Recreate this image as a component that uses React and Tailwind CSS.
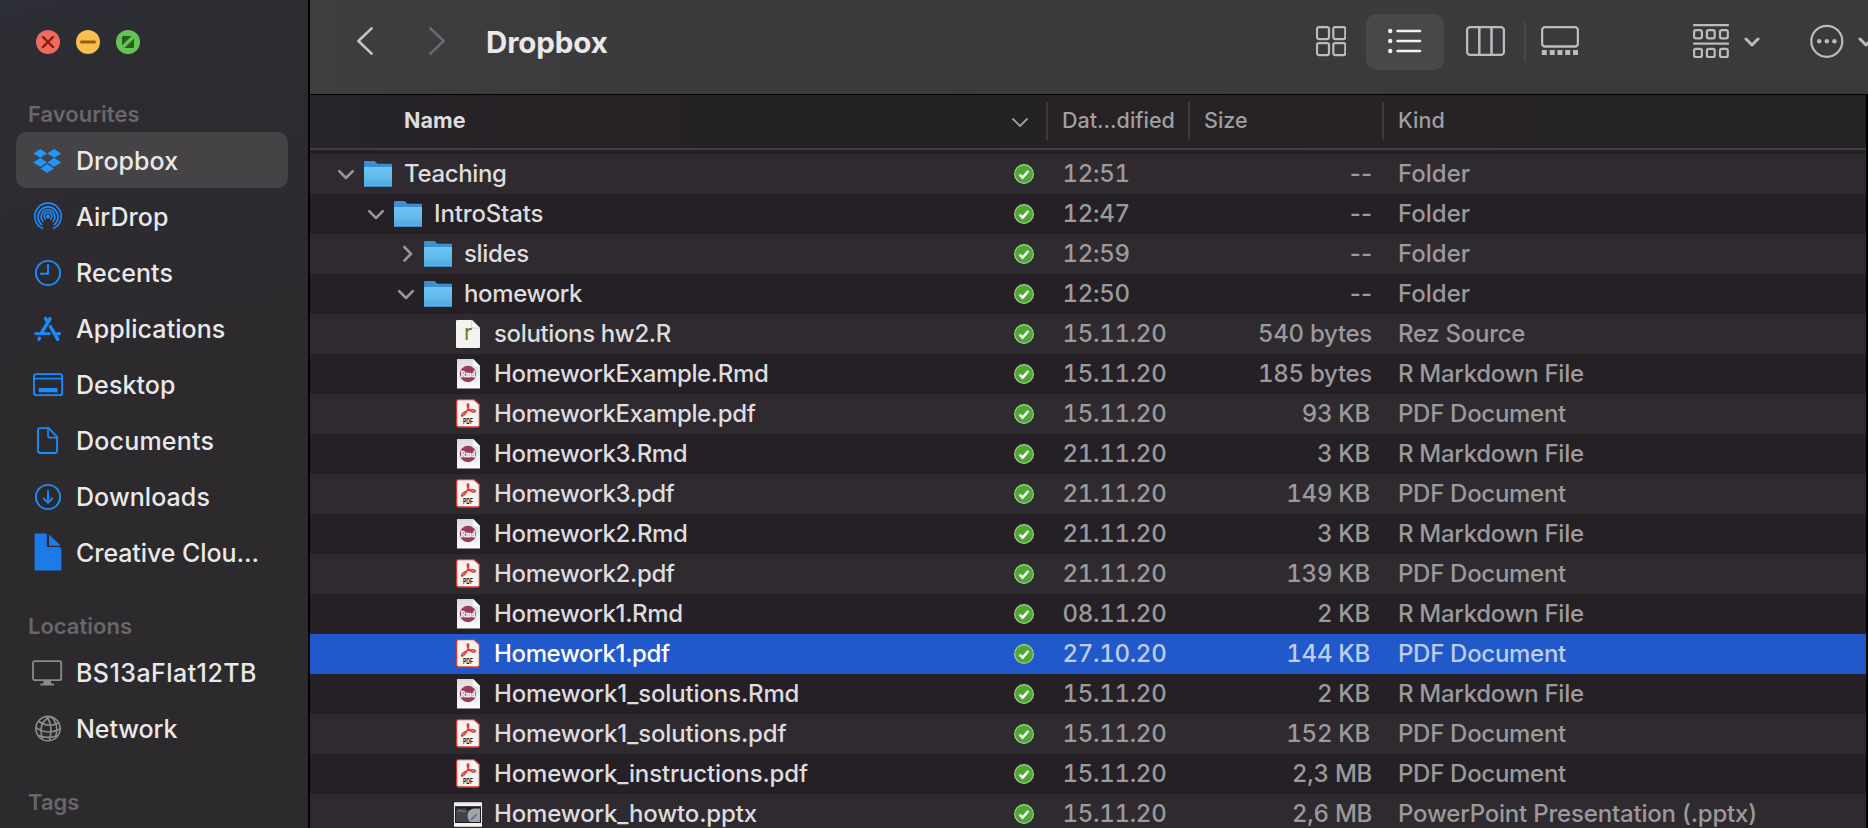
import React from "react";

const BLUE = "#1a8cff";
const GREY = "#8b8a8d";

/* ---------- sidebar icons ---------- */

const SidebarSvg = ({ children }) => (
  <svg width="32" height="40" viewBox="0 0 32 40" fill="none" className="shrink-0">
    {children}
  </svg>
);

const DropboxIcon = () => (
  <SidebarSvg>
    <g fill="#2196fb">
      <path d="M8.3 9 15 13.4 8.3 17.8 1.3 13.4z" />
      <path d="M22.2 9 29.2 13.4 22.2 17.8 15.3 13.4z" />
      <path d="M8.3 18 15 22.4 8.3 26.8 1.3 22.4z" />
      <path d="M22.2 18 29.2 22.4 22.2 26.8 15.3 22.4z" />
      <path d="M15.2 24 22 28.5 15.2 33 8.4 28.5z" />
    </g>
  </SidebarSvg>
);

const AirDropIcon = () => (
  <SidebarSvg>
    <g stroke={BLUE} strokeWidth="1.7" strokeLinecap="round">
      <path d="M10.3 32.3A13.2 13.2 0 1 1 21.7 32.3" />
      <path d="M9.6 28.6A10 10 0 1 1 22.4 28.6" />
      <path d="M10.9 25.3A6.9 6.9 0 1 1 21.1 25.3" />
      <path d="M13.3 23A3.9 3.9 0 1 1 18.7 23" />
    </g>
    <circle cx="16" cy="20.6" r="2" fill={BLUE} />
  </SidebarSvg>
);

const RecentsIcon = () => (
  <SidebarSvg>
    <g stroke={BLUE} strokeWidth="1.9" strokeLinecap="round" strokeLinejoin="round">
      <circle cx="16" cy="21" r="12.1" />
      <path d="M16 12.6V21.7H8.8" />
    </g>
  </SidebarSvg>
);

const ApplicationsIcon = () => (
  <SidebarSvg>
    <g stroke={BLUE} strokeWidth="3.4" strokeLinecap="round">
      <path d="M13.6 10.6 15.6 14" />
      <path d="M18.1 10.6 9.6 24.8" />
      <path d="M18.4 18.6 25.8 31.4" />
      <path d="M6.9 31.2 7.5 30.2" />
    </g>
    <g stroke={BLUE} strokeWidth="2.8" strokeLinecap="round">
      <path d="M3.6 25.6H17.4" />
      <path d="M23.4 25.6H27.6" />
    </g>
  </SidebarSvg>
);

const DesktopIcon = () => (
  <SidebarSvg>
    <rect x="2" y="10.1" width="28.2" height="21" rx="2.4" stroke={BLUE} strokeWidth="1.9" />
    <path d="M2 14.6H30" stroke={BLUE} strokeWidth="1.6" />
    <rect x="6.6" y="24" width="19" height="4.2" rx="1" fill={BLUE} />
  </SidebarSvg>
);

const DocumentsIcon = () => (
  <SidebarSvg>
    <g stroke={BLUE} strokeWidth="1.9" strokeLinejoin="round">
      <path d="M8.4 8.1H16.6L25.1 16.9V30.6A2.4 2.4 0 0 1 22.7 33H8.4A2.4 2.4 0 0 1 6 30.6V10.4A2.4 2.4 0 0 1 8.4 8.1z" />
      <path d="M16 8.6V16A1.6 1.6 0 0 0 17.6 17.6H24.8" strokeWidth="1.6" />
    </g>
  </SidebarSvg>
);

const DownloadsIcon = () => (
  <SidebarSvg>
    <g stroke={BLUE} strokeWidth="1.9" strokeLinecap="round" strokeLinejoin="round">
      <circle cx="16" cy="21" r="12.1" />
      <path d="M16 15V26.2M11.6 22.4 16 26.8 20.4 22.4" />
    </g>
  </SidebarSvg>
);

const CreativeIcon = () => (
  <SidebarSvg>
    <path d="M2.6 1.6H13.6Q14.8 1.6 14.8 2.8V15H26.4Q29.4 15.4 29.4 18V38.4H2.6z" fill="#1d7be8" />
    <path d="M17 2.6 29 13.8H17z" fill="#1d7be8" />
  </SidebarSvg>
);

const DisplayIcon = () => (
  <SidebarSvg>
    <rect x="1" y="9.2" width="28.2" height="19" rx="2" stroke={GREY} strokeWidth="1.8" />
    <path d="M11.4 28.4H19V31.6H21.2A1 1 0 0 1 21.2 33.6H9.2A1 1 0 0 1 9.2 31.6H11.4z" fill={GREY} />
  </SidebarSvg>
);

const NetworkIcon = () => (
  <SidebarSvg>
    <g stroke={GREY} strokeWidth="1.6">
      <circle cx="16" cy="20.6" r="12.2" />
      <path d="M19 8.8C10 12 7 20 10.6 31.6" />
      <path d="M14.4 8.6C19.4 14 19.6 24 17.4 32.6" />
      <path d="M19 8.8C25.6 14 25.4 23 23.2 30.4" />
      <path d="M6.6 13.2C12 18 20 18.6 26.8 14.8" />
      <path d="M4 19.4C11 25.4 21 25 28.2 21" />
      <path d="M6 27.2C12 30 19 30 25.6 27.4" />
    </g>
  </SidebarSvg>
);

/* ---------- file icons ---------- */

const FileSvg = ({ children }) => (
  <svg width="28" height="30" viewBox="0 0 28 30" fill="none" className="shrink-0 overflow-visible">
    {children}
  </svg>
);

const FolderIcon = () => (
  <FileSvg>
    <path d="M0 3A1 1 0 0 1 1 2H10C12 2 12 4.8 14.6 4.8H27.2A.8 .8 0 0 1 28 5.6V26H0z" fill="#3a8fd0" />
    <path d="M0 9A1 1 0 0 1 1 8H27A1 1 0 0 1 28 9V27A1 1 0 0 1 27 28H1A1 1 0 0 1 0 27z" fill="url(#folderFace)" />
    <path d="M0 22.5H28M0 25H28" stroke="#4a9fdb" strokeOpacity=".55" strokeWidth=".8" />
    <path d="M.4 27.5H27.6" stroke="#3b8cc6" strokeWidth=".9" />
  </FileSvg>
);

const RIcon = () => (
  <FileSvg>
    <path d="M3 1H17.8L26 9V28A1 1 0 0 1 25 29H3A1 1 0 0 1 2 28V2A1 1 0 0 1 3 1z" fill="#f3f3f2" />
    <path d="M17.8 1 26 9H18.8A1 1 0 0 1 17.8 8z" fill="#fff" stroke="#b9b9b9" strokeWidth=".7" />
    <text x="14.2" y="21" textAnchor="middle" fontSize="22" fontWeight="400" fontFamily="Inter, sans-serif" letterSpacing="0" fill="#75762a">r</text>
  </FileSvg>
);

const RmdIcon = () => (
  <FileSvg>
    <path d="M3 0H19L26 7V29.6H3z" fill="url(#rmdPage)" />
    <path d="M19 0 26 7H20A1 1 0 0 1 19 6z" fill="#fff" />
    <circle cx="14" cy="15" r="8.2" fill="#983c62" />
    <text x="14" y="17.8" textAnchor="middle" fontSize="8.6" fontWeight="700" letterSpacing="0" textLength="14.4" lengthAdjust="spacingAndGlyphs" fontFamily="'Liberation Serif', serif" fill="#fff" stroke="#fff" strokeWidth=".35">Rmd</text>
  </FileSvg>
);

const PdfIcon = () => (
  <FileSvg>
    <path d="M4.4 .7H20.2L25.4 5.6V26A2 2 0 0 1 23.4 28H4.6A2 2 0 0 1 2.6 26V2.6A1.9 1.9 0 0 1 4.4 .7z" fill="#f6f5f4" stroke="#d93a2b" strokeWidth="1.3" />
    <path
      d="M7.5 16.4C7.4 14.4 12 11.6 17 10.9C20.4 10.5 21.9 11.2 21.4 12.3C20.6 13.7 16.6 12.9 14.6 9.9C12.9 7.3 12.8 5 14 5C15.5 5 14.8 9 12.4 12.9C10.3 16.4 7.5 18.2 7.5 16.4z"
      stroke="#e5322a"
      strokeWidth="1.4"
      strokeLinejoin="round"
    />
    <text x="14" y="25" textAnchor="middle" fontSize="7.6" fontWeight="700" letterSpacing="0" textLength="10" lengthAdjust="spacingAndGlyphs" fontFamily="Inter, sans-serif" fill="#1c1c1c">PDF</text>
  </FileSvg>
);

const PptxIcon = () => (
  <FileSvg>
    <rect x="0" y="3.2" width="28" height="24.6" rx=".8" fill="#f2f2f2" />
    <rect x="1" y="7.2" width="26" height="16.8" fill="#1c1c1e" />
    <path d="M2 9.6H12.4V11H25.4V23H2z" fill="#434345" />
    <path d="M4 12.4C6.4 9.6 8.6 13.6 11.6 12" stroke="#77777a" strokeWidth="1.4" />
    <path d="M26 9.6V23H16C11.4 18 13.6 9.6 20.6 9.6z" fill="#a3a4a6" />
    <path d="M17 20.8 22.8 15" stroke="#4775c4" strokeWidth="1.7" />
  </FileSvg>
);

const SyncedIcon = () => (
  <svg width="20" height="20" viewBox="0 0 20 20" fill="none" className="shrink-0">
    <circle cx="10" cy="10" r="9.4" fill="#4fa834" stroke="#a0d192" strokeWidth="1.1" />
    <path d="M5.6 10.6 8.7 13.6 14.4 7" stroke="#fff" strokeWidth="2.6" />
  </svg>
);

const Disclosure = ({ open }) => (
  <svg width="18" height="18" viewBox="0 0 18 18" fill="none" className="shrink-0">
    <path
      d={open ? "M2.2 6.2 9 13 15.8 6.2" : "M7.4 2 14 8.8 7.4 15.6"}
      stroke="#98969a"
      strokeWidth="2.6"
      strokeLinecap="round"
      strokeLinejoin="round"
    />
  </svg>
);

const ICONS = { folder: FolderIcon, r: RIcon, rmd: RmdIcon, pdf: PdfIcon, pptx: PptxIcon };

/* ---------- data ---------- */

const FAVOURITES = [
  ["Dropbox", DropboxIcon],
  ["AirDrop", AirDropIcon],
  ["Recents", RecentsIcon],
  ["Applications", ApplicationsIcon],
  ["Desktop", DesktopIcon],
  ["Documents", DocumentsIcon, "tracking-[0.008em]"],
  ["Downloads", DownloadsIcon],
  ["Creative Clou...", CreativeIcon, "tracking-[-0.003em]"],
];

const LOCATIONS = [
  ["BS13aFlat12TB", DisplayIcon, "tracking-[0.018em]"],
  ["Network", NetworkIcon, "tracking-[-0.004em]"],
];

const ROWS = [
  { name: "Teaching", icon: "folder", depth: 0, open: true, date: "12:51", size: "--", kind: "Folder" },
  { name: "IntroStats", icon: "folder", depth: 1, open: true, date: "12:47", size: "--", kind: "Folder", wide: true },
  { name: "slides", icon: "folder", depth: 2, open: false, date: "12:59", size: "--", kind: "Folder" },
  { name: "homework", icon: "folder", depth: 2, open: true, date: "12:50", size: "--", kind: "Folder" },
  { name: "solutions hw2.R", icon: "r", date: "15.11.20", size: "540 bytes", kind: "Rez Source" },
  { name: "HomeworkExample.Rmd", icon: "rmd", date: "15.11.20", size: "185 bytes", kind: "R Markdown File" },
  { name: "HomeworkExample.pdf", icon: "pdf", date: "15.11.20", size: "93 KB", kind: "PDF Document" },
  { name: "Homework3.Rmd", icon: "rmd", date: "21.11.20", size: "3 KB", kind: "R Markdown File" },
  { name: "Homework3.pdf", icon: "pdf", date: "21.11.20", size: "149 KB", kind: "PDF Document" },
  { name: "Homework2.Rmd", icon: "rmd", date: "21.11.20", size: "3 KB", kind: "R Markdown File" },
  { name: "Homework2.pdf", icon: "pdf", date: "21.11.20", size: "139 KB", kind: "PDF Document" },
  { name: "Homework1.Rmd", icon: "rmd", date: "08.11.20", size: "2 KB", kind: "R Markdown File" },
  { name: "Homework1.pdf", icon: "pdf", date: "27.10.20", size: "144 KB", kind: "PDF Document", selected: true },
  { name: "Homework1_solutions.Rmd", icon: "rmd", date: "15.11.20", size: "2 KB", kind: "R Markdown File", wide: true },
  { name: "Homework1_solutions.pdf", icon: "pdf", date: "15.11.20", size: "152 KB", kind: "PDF Document", wide: true },
  { name: "Homework_instructions.pdf", icon: "pdf", date: "15.11.20", size: "2,3 MB", kind: "PDF Document", wide: true },
  { name: "Homework_howto.pptx", icon: "pptx", date: "15.11.20", size: "2,6 MB", kind: "PowerPoint Presentation (.pptx)", wide: true },
];

const INDENT = ["pl-[27px]", "pl-[57px]", "pl-[87px]"];

/* ---------- sidebar ---------- */

function SidebarItem({ label, Icon, selected, tracking = "tracking-[0.003em]" }) {
  return (
    <li className={`flex h-14 items-center rounded-[10px] pl-4 ${selected ? "bg-[#464347]" : ""}`}>
      <Icon />
      <span className={`pt-[2px] pl-3 text-[25px] leading-none font-[450] whitespace-nowrap text-[#e9e8ea] ${tracking}`}>
        {label}
      </span>
    </li>
  );
}

function SidebarHeading({ children }) {
  return (
    <h2 className="pl-7 text-[22px] leading-[26px] font-semibold text-[#68666b]">{children}</h2>
  );
}

function Sidebar() {
  return (
    <aside className="h-full w-[310px] shrink-0 border-r-2 border-black bg-[linear-gradient(165deg,#2c2e36_0px,#2d2b2f_130px,#2c2a2d_500px,#2d2a2d_100%)]">
      <div className="flex gap-4 pt-[30px] pl-9">
        <svg width="24" height="24" viewBox="0 0 24 24">
          <circle cx="12" cy="12" r="12" fill="#ec6a5e" />
          <path d="M7 7 17 17M17 7 7 17" stroke="#8a1a10" strokeWidth="2.4" strokeLinecap="round" />
        </svg>
        <svg width="24" height="24" viewBox="0 0 24 24">
          <circle cx="12" cy="12" r="12" fill="#f4bf4f" />
          <path d="M5.4 12H18.6" stroke="#95600f" strokeWidth="2.8" strokeLinecap="round" />
        </svg>
        <svg width="24" height="24" viewBox="0 0 24 24">
          <circle cx="12" cy="12" r="12" fill="#61c454" />
          <path d="M7.6 6H15.6L6 15.6V7.6A1.6 1.6 0 0 1 7.6 6zM18 8.4V16.4A1.6 1.6 0 0 1 16.4 18H8.4z" fill="#255f19" />
        </svg>
      </div>
      <nav>
        <div className="pt-[47px]">
          <SidebarHeading>Favourites</SidebarHeading>
        </div>
        <ul className="mt-[5px] ml-4 w-[272px]">
          {FAVOURITES.map(([label, Icon, tracking], i) => (
            <SidebarItem key={label} label={label} Icon={Icon} tracking={tracking} selected={i === 0} />
          ))}
        </ul>
        <div className="pt-[33px]">
          <SidebarHeading>Locations</SidebarHeading>
        </div>
        <ul className="mt-[5px] ml-4 w-[272px]">
          {LOCATIONS.map(([label, Icon, tracking]) => (
            <SidebarItem key={label} label={label} Icon={Icon} tracking={tracking} />
          ))}
        </ul>
        <div className="pt-[33px]">
          <SidebarHeading>Tags</SidebarHeading>
        </div>
      </nav>
    </aside>
  );
}

/* ---------- toolbar ---------- */

const TOOL = "#bdbbbe";

function Toolbar() {
  return (
    <header className="flex h-[95px] shrink-0 items-start border-b border-black bg-[linear-gradient(90deg,#3f3d40,#3b3a3c_300px,#3b393c)]">
      <div className="flex h-[84px] w-full items-center overflow-hidden">
        <svg width="18" height="30" viewBox="0 0 18 30" fill="none" className="ml-[46px] shrink-0">
          <path d="M15.6 1.4 2.4 14 15.6 26.6" stroke="#c6c4c7" strokeWidth="2.6" strokeLinecap="round" strokeLinejoin="round" />
        </svg>
        <svg width="18" height="30" viewBox="0 0 18 30" fill="none" className="ml-[54px] shrink-0">
          <path d="M2.4 1.4 15.6 14 2.4 26.6" stroke="#6b696d" strokeWidth="2.6" strokeLinecap="round" strokeLinejoin="round" />
        </svg>
        <h1 className="ml-[40px] text-[29.5px] leading-[30px] font-bold tracking-[-0.004em] text-[#e9e8ea]">Dropbox</h1>

        <div className="ml-auto flex shrink-0 items-center">
          <svg width="30" height="32" viewBox="0 0 30 32" fill="none">
            <g stroke={TOOL} strokeWidth="2.2">
              <rect x="1" y="1.1" width="12" height="12" rx="2" />
              <rect x="17.3" y="1.1" width="12" height="12" rx="2" />
              <rect x="1" y="17.1" width="12" height="12" rx="2" />
              <rect x="17.3" y="17.1" width="12" height="12" rx="2" />
            </g>
          </svg>
          <div className="ml-5 flex h-14 w-[78px] items-center justify-center rounded-[10px] bg-[#49474a]">
            <svg width="34" height="28" viewBox="0 0 34 28" fill="none">
              <g fill="#f2f1f3">
                <circle cx="2.2" cy="3" r="2.2" />
                <circle cx="2.2" cy="13" r="2.2" />
                <circle cx="2.2" cy="23" r="2.2" />
              </g>
              <path d="M9.6 3H32M9.6 13H32M9.6 23H32" stroke="#f2f1f3" strokeWidth="2.6" strokeLinecap="round" />
            </svg>
          </div>
          <svg width="39" height="32" viewBox="0 0 39 32" fill="none" className="ml-[22px]">
            <rect x="1.1" y="1.1" width="36.8" height="27.8" rx="3" stroke={TOOL} strokeWidth="2.3" />
            <path d="M13.3 1V29M25.5 1V29" stroke={TOOL} strokeWidth="2.5" />
          </svg>
          <div className="ml-[19px] h-10 w-[2px] bg-[#4a484b]" />
          <svg width="38" height="32" viewBox="0 0 38 32" fill="none" className="ml-[15px]">
            <rect x="1.1" y="1.1" width="35.8" height="19.4" rx="3" stroke={TOOL} strokeWidth="2.3" />
            <path d="M.8 24h5v5h-5zM8.7 24h5v5h-5zM16.4 24h5v5h-5zM24.2 24h5v5h-5zM32 24h5v5h-5z" fill={TOOL} />
          </svg>
          <svg width="36" height="36" viewBox="0 0 36 36" fill="none" className="ml-[114px]">
            <path d="M1 1.2H35M1 19.6H35" stroke={TOOL} strokeWidth="2.2" strokeLinecap="round" />
            <g stroke={TOOL} strokeWidth="2.2">
              <rect x="1.1" y="6.2" width="7.8" height="8.2" rx="1.8" />
              <rect x="13.9" y="6.2" width="7.8" height="8.2" rx="1.8" />
              <rect x="27" y="6.2" width="7.8" height="8.2" rx="1.8" />
              <rect x="1.1" y="24.8" width="7.8" height="8.2" rx="1.8" />
              <rect x="13.9" y="24.8" width="7.8" height="8.2" rx="1.8" />
              <rect x="27" y="24.8" width="7.8" height="8.2" rx="1.8" />
            </g>
          </svg>
          <svg width="16" height="12" viewBox="0 0 16 12" fill="none" className="ml-[15px]">
            <path d="M2 3 8 9 14 3" stroke={TOOL} strokeWidth="3" strokeLinecap="round" strokeLinejoin="round" />
          </svg>
          <svg width="34" height="36" viewBox="0 0 34 36" fill="none" className="ml-[50px]">
            <circle cx="16.8" cy="17.3" r="15.5" stroke={TOOL} strokeWidth="2.2" />
            <circle cx="9.2" cy="17.3" r="2.2" fill={TOOL} />
            <circle cx="16.8" cy="17.3" r="2.2" fill={TOOL} />
            <circle cx="24.4" cy="17.3" r="2.2" fill={TOOL} />
          </svg>
          <svg width="10" height="12" viewBox="0 0 10 12" fill="none" className="ml-[14px]">
            <path d="M2 3 8 9 14 3" stroke={TOOL} strokeWidth="3" strokeLinecap="round" strokeLinejoin="round" />
          </svg>
        </div>
      </div>
    </header>
  );
}

/* ---------- file list ---------- */

function ColumnHeader() {
  const cell = "flex h-[38px] items-center";
  return (
    <div className="flex h-[55px] shrink-0 items-start border-b-2 border-[#413e42] bg-[linear-gradient(90deg,#26252a,#272125_220px,#232123_500px,#272226_1000px,#242224)] pt-[7px] text-[21.5px] leading-8 text-[#a09ea1]">
      <div className={`${cell} w-[738px] justify-between border-r-2 border-[#3d3a3e] pr-[17px] pl-[94px]`}>
        <span className="pb-[2px] font-bold tracking-[0.003em] text-[#dddcde]">Name</span>
        <svg width="18" height="12" viewBox="0 0 18 12" fill="none" className="mt-[3px]">
          <path d="M2 2 9 9 16 2" stroke="#a09ea1" strokeWidth="1.8" strokeLinecap="round" strokeLinejoin="round" />
        </svg>
      </div>
      <div className={`${cell} w-[142px] border-r-2 border-[#3d3a3e] pb-[2px] pl-[14px] font-medium`}>Dat...dified</div>
      <div className={`${cell} w-[194px] border-r-2 border-[#3d3a3e] pb-[2px] pl-[14px] font-medium`}>Size</div>
      <div className={`${cell} pb-[2px] pl-[14px] font-medium`}>Kind</div>
    </div>
  );
}

function Row({ row, index }) {
  const Icon = ICONS[row.icon];
  const isFolder = row.icon === "folder";
  const bg = row.selected ? "bg-[#2159ca]" : index % 2 === 0 ? "bg-[#2f2a2f]" : "bg-[#252025]";
  const primary = row.selected ? "text-white" : "text-[#dddcde]";
  const secondary = row.selected ? "text-[#bccdef]" : "text-[#9b999c]";
  const tracking = row.wide ? "tracking-[-0.006em]" : "tracking-[-0.015em]";
  const sizeEdge = row.size.endsWith("KB") ? "pr-[2px]" : "";
  const kindTracking = isFolder ? "tracking-normal" : row.icon === "pptx" ? "tracking-[-0.008em]" : "";
  return (
    <div className={`flex h-10 shrink-0 items-center text-[24px] leading-10 font-[450] tracking-[-0.012em] whitespace-nowrap ${bg} ${secondary}`}>
      <div className={`flex h-10 w-[704px] shrink-0 items-center ${isFolder ? INDENT[row.depth] : "pl-[144px]"}`}>
        {isFolder && (
          <span className="mr-[9px] flex">
            <Disclosure open={row.open} />
          </span>
        )}
        <Icon />
        <span className={`pl-3 ${primary} ${tracking}`}>{row.name}</span>
      </div>
      <SyncedIcon />
      <span className="w-[160px] shrink-0 pl-[28.5px] tabular-nums">{row.date}</span>
      <span className={`w-[178px] shrink-0 text-right ${sizeEdge} ${isFolder ? "tracking-normal" : "tabular-nums"}`}>{row.size}</span>
      <span className={`pl-[26px] ${kindTracking}`}>{row.kind}</span>
    </div>
  );
}

export default function App() {
  return (
    <div className="flex h-[828px] w-[1868px] overflow-hidden bg-[#252025] font-[Inter,'Liberation_Sans',sans-serif] antialiased">
      <svg width="0" height="0" className="absolute">
        <defs>
          <linearGradient id="folderFace" x1="0" y1="0" x2="0" y2="1">
            <stop offset="0" stopColor="#6fc5f4" />
            <stop offset="1" stopColor="#55aee6" />
          </linearGradient>
          <linearGradient id="rmdPage" x1="0" y1="0" x2="0" y2="1">
            <stop offset="0" stopColor="#dcdcdc" />
            <stop offset="1" stopColor="#fbfbfb" />
          </linearGradient>
        </defs>
      </svg>
      <Sidebar />
      <main className="flex h-full min-w-0 flex-1 flex-col">
        <Toolbar />
        <div className="flex min-h-0 flex-1 flex-col overflow-hidden border-r-2 border-black">
          <ColumnHeader />
          <div className="flex flex-col overflow-hidden pt-1">
            {ROWS.map((row, i) => (
              <Row key={row.name} row={row} index={i} />
            ))}
          </div>
        </div>
      </main>
    </div>
  );
}
